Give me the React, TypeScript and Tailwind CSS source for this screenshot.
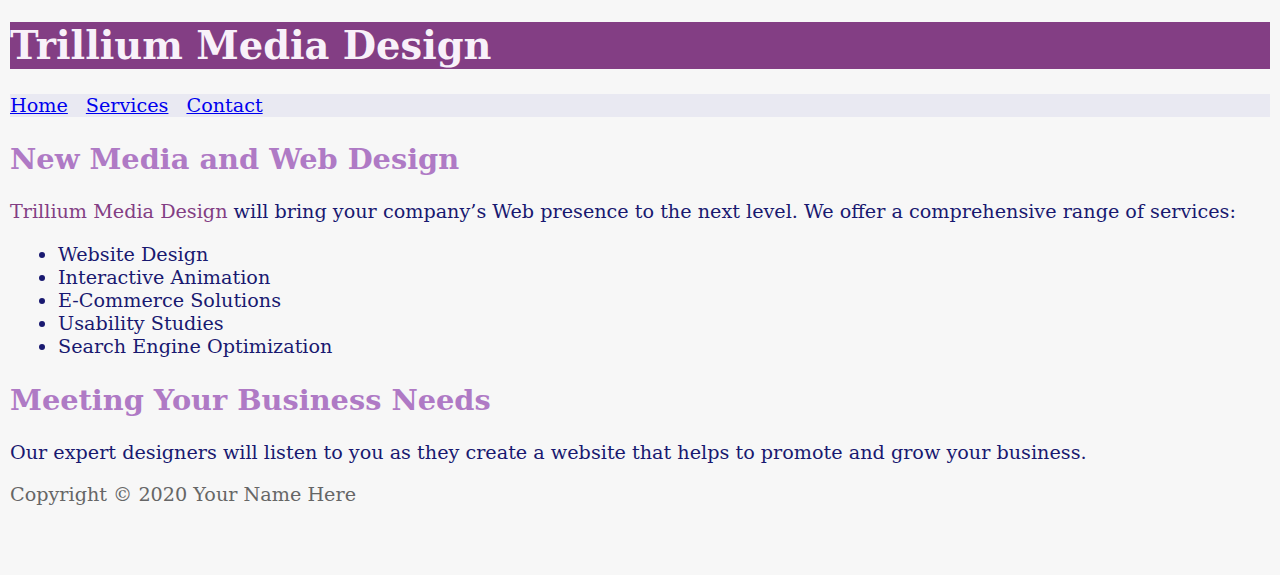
import React from "react";

const services = [
  "Website Design",
  "Interactive Animation",
  "E-Commerce Solutions",
  "Usability Studies",
  "Search Engine Optimization",
];

export default function App() {
  return (
    <div className="min-h-[575px] bg-[#f7f7f7] px-[10px] pt-[22px] font-['DejaVu_Serif',serif] text-[19.2px] text-[#191970]">
      <header>
        <h1 className="bg-[#833e84] text-[38.4px] font-bold leading-[47px] text-[#f8f1f9]">
          Trillium Media Design
        </h1>
      </header>

      <nav className="mt-[25px] flex gap-[18px] bg-[#e9e9f2] leading-[23px]">
        <a href="#" className="text-[#0000ee] underline">Home</a>
        <a href="#" className="text-[#0000ee] underline">Services</a>
        <a href="#" className="text-[#0000ee] underline">Contact</a>
      </nav>

      <main>
        <h2 className="mt-[26px] text-[28.8px] font-bold leading-[33px] text-[#af7ac5]">
          New Media and Web Design
        </h2>
        <p className="mt-[24px] leading-[23px]">
          <span className="text-[#833e84]">Trillium Media Design</span> will
          bring your company’s Web presence to the next level. We offer a
          comprehensive range of services:
        </p>
        <ul className="mt-[20px] list-disc pl-[48px] leading-[23px]">
          {services.map((s) => (
            <li key={s}>{s}</li>
          ))}
        </ul>
        <h2 className="mt-[26px] text-[28.8px] font-bold leading-[33px] text-[#af7ac5]">
          Meeting Your Business Needs
        </h2>
        <p className="mt-[24px] leading-[23px]">
          Our expert designers will listen to you as they create a website that
          helps to promote and grow your business.
        </p>
      </main>

      <footer className="mt-[19px] leading-[23px] text-[#666666]">
        Copyright © 2020 Your Name Here
      </footer>
    </div>
  );
}
